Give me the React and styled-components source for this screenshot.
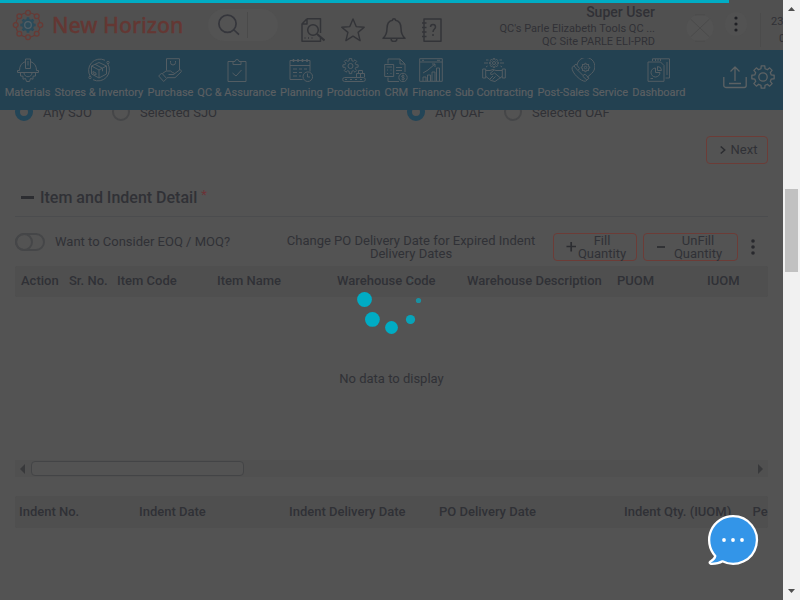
import React from "react";
import styled, { createGlobalStyle } from "styled-components";

const GlobalStyle = createGlobalStyle`
  * { box-sizing: border-box; }
  body { margin: 0; overflow: hidden; background: #535353; font-family: Roboto, "Liberation Sans", sans-serif; }
`;

const ink = "#303136";
const line = "#4b4c4e";

const Screen = styled.div`
  position: relative;
  display: grid;
  grid-template-columns: 783px 17px;
  width: 800px;
  height: 600px;
  overflow: hidden;
  color: ${ink};
`;
const Page = styled.div`
  display: flex;
  flex-direction: column;
  min-width: 0;
  height: 600px;
  overflow: hidden;
  background: #535353;
`;
const Progress = styled.div`
  position: absolute;
  top: 0;
  left: 0;
  width: 729px;
  height: 3px;
  background: #00acc4;
`;

/* Header */
const Header = styled.header`
  display: flex;
  align-items: flex-start;
  flex: none;
  height: 50px;
  padding-left: 12px;
  background: #505050;
  overflow: hidden;
`;
const LogoMark = styled.svg`
  flex: none;
  width: 32px;
  height: 32px;
  margin-top: 9px;
`;
const Brand = styled.div`
  flex: none;
  width: 164px;
  padding: 8px 0 0 8px;
  font: 500 21.3px/33px "Noto Sans", sans-serif;
  -webkit-text-stroke: 0.3px #643733;
  color: #643733;
  white-space: nowrap;
`;
const SearchPill = styled.div`
  display: flex;
  flex: none;
  width: 70px;
  height: 32px;
  margin-top: 9px;
  border-radius: 16px;
  background: #535353;
`;
const SearchButton = styled.div`
  width: 40px;
  height: 26px;
  margin-top: 3px;
  padding: 2px 0 0 9px;
  border-right: 1px solid #4a4a4a;
`;
const HeaderIcons = styled.div`
  display: flex;
  flex: none;
  gap: 16.4px;
  margin: 18px 0 0 23px;
  svg { flex: none; }
`;
const UserBlock = styled.div`
  flex: 1;
  padding-top: 3px;
  text-align: right;
  white-space: nowrap;
`;
const UserName = styled.div`
  font-size: 14px;
  line-height: 18px;
  margin-bottom: 1px;
  font-weight: 500;
`;
const UserLine = styled.div`
  font-size: 11px;
  line-height: 13px;
`;
const Avatar = styled.div`
  flex: none;
  width: 28px;
  height: 28px;
  margin: 14px 0 0 31px;
`;
const MoreCircle = styled.div`
  display: flex;
  flex: none;
  align-items: center;
  justify-content: center;
  width: 22px;
  height: 24px;
  margin: 12px 0 0 11px;
  border-radius: 12px;
  background: #525252;
`;
const Clock = styled.div`
  flex: none;
  width: 23px;
  margin: 13px 0 0 13px;
  padding-left: 10px;
  border-left: 1px solid #4b4b4b;
  font-size: 11px;
  line-height: 17px;
  white-space: nowrap;
`;
const ClockLine = styled.div`
  padding-left: ${(p) => (p.$second ? 8 : 0)}px;
`;

/* Module bar */
const ModuleBar = styled.nav`
  display: flex;
  flex: none;
  height: 60px;
  padding: 8px 0 0 5px;
  background: #234151;
  color: #5b5f62;
`;
const Module = styled.div`
  display: flex;
  flex-direction: column;
  flex: none;
  align-items: center;
  width: ${(p) => p.$w}px;
  margin-right: 4.3px;
  font-size: 11px;
  line-height: 14px;
  font-weight: 400;
  -webkit-text-stroke: 0.2px #5b5f62;
  white-space: nowrap;
  svg { flex: none; margin-bottom: 4px; color: #535d63; }
`;
const BarTools = styled.div`
  display: flex;
  gap: 4px;
  margin: 7px 0 0 auto;
  padding-right: 8px;
  color: #5d6264;
`;

/* Form content */
const Content = styled.main`
  flex: 1;
  min-height: 0;
  padding: 0 15px;
  overflow: hidden;
  font-size: 13px;
`;
const RadioRow = styled.div`
  display: flex;
  height: 20px;
  margin-top: -8px;
`;
const RadioOption = styled.div`
  display: flex;
  align-items: center;
  gap: 10px;
  width: ${(p) => p.$w}px;
  line-height: 20px;
  span + span { margin-top: 2px; }
`;
const RadioDot = styled.span`
  width: 18px;
  height: 18px;
  border-radius: 50%;
  border: ${(p) => (p.$on ? "5px solid #234557" : "2px solid #454648")};
`;
const NextRow = styled.div`
  display: flex;
  justify-content: flex-end;
  margin-top: 14px;
`;
const OutlineButton = styled.div`
  display: flex;
  flex: none;
  align-items: center;
  justify-content: center;
  gap: ${(p) => p.$gap}px;
  width: ${(p) => p.$w}px;
  height: 28px;
  padding: 0 0 ${(p) => p.$lift || 0}px ${(p) => p.$pad || 0}px;
  border: 1px solid #6c3c37;
  border-radius: 4px;
  line-height: 13px;
  text-align: center;
`;
const UnfillButton = styled(OutlineButton)`
  margin-left: 6px;
  padding-right: 2px;
`;
const SectionTitle = styled.div`
  display: flex;
  align-items: center;
  height: 40px;
  margin-top: 13px;
  padding: 2px 0 0 6px;
  border-bottom: 1px solid ${line};
  font-size: 16px;
  font-weight: 500;
`;
const Dash = styled.span`
  width: 13px;
  height: 3px;
  margin: 0 6px 0 0;
  background: #2c2d31;
`;
const Required = styled.span`
  margin: -7px 0 0 4px;
  font-size: 13px;
  font-weight: 400;
  color: #6d3236;
`;
const Actions = styled.div`
  display: flex;
  align-items: center;
  height: 28px;
  margin-top: 16px;
`;
const Toggle = styled.div`
  flex: none;
  width: 30px;
  height: 18px;
  margin-top: -10px;
  border: 2px solid #454648;
  border-radius: 9px;
`;
const ToggleKnob = styled.div`
  width: 18px;
  height: 18px;
  margin: -2px 0 0 -2px;
  border: 2px solid #454648;
  border-radius: 50%;
`;
const ToggleLabel = styled.div`
  width: 226px;
  margin: -11px 0 0 10px;
`;
const ChangeDate = styled.div`
  width: 260px;
  margin-right: 12px;
  line-height: 13px;
  text-align: center;
`;
const RowMenu = styled.div`
  margin-left: 12px;
  height: 18px;
`;
const HeadRow = styled.div`
  display: flex;
  align-items: center;
  height: ${(p) => p.$h}px;
  margin-top: ${(p) => p.$mt}px;
  padding: 0 0 2px ${(p) => p.$pl}px;
  background: #4f4f4f;
  border-radius: 2px;
  overflow: hidden;
  font-weight: 500;
  white-space: nowrap;
`;
const HeadCell = styled.div`
  flex: none;
  width: ${(p) => p.$w}px;
`;
const Empty = styled.div`
  display: flex;
  align-items: center;
  justify-content: center;
  height: 163px;
`;
const HScroll = styled.div`
  display: flex;
  align-items: center;
  height: 17px;
  padding: 0 5px;
  background: #505050;
`;
const HThumb = styled.div`
  width: 213px;
  height: 15px;
  margin: 0 auto 0 6px;
  border: 1px solid #434446;
  border-radius: 4px;
  background: #535353;
`;

/* Window scroll bar */
const VScroll = styled.div`
  display: flex;
  flex-direction: column;
  align-items: center;
  height: 600px;
  padding: 7px 0;
  background: #f1f1f1;
  svg { flex: none; }
`;
const VThumb = styled.div`
  width: 13px;
  height: 83px;
  margin: 178px 0 auto;
  background: #c1c1c1;
`;

/* Floating layers */
const Spinner = styled.svg`
  position: absolute;
  left: 350px;
  top: 270px;
`;
const Chat = styled.svg`
  position: absolute;
  left: 705px;
  top: 512px;
`;

const Icon = ({ children, size = 24, stroke = "currentColor", sw = 1, box = 24 }) => (
  <svg width={size} height={size} viewBox={`0 0 ${box} ${box}`} fill="none" stroke={stroke} strokeWidth={sw} strokeLinejoin="round">
    {children}
  </svg>
);

const gearPath = (cx, cy, R, r, n = 8) => {
  const pts = [];
  for (let i = 0; i < n; i++) {
    [[-0.31, r], [-0.2, R], [0.2, R], [0.31, r]].forEach(([o, rad]) => {
      const a = ((i + o) * 2 * Math.PI) / n - Math.PI / 2;
      pts.push(`${(cx + rad * Math.cos(a)).toFixed(2)} ${(cy + rad * Math.sin(a)).toFixed(2)}`);
    });
  }
  return `M${pts.join("L")}Z`;
};

const modules = [
  ["Materials", 45.2, <>
    <path d="M3.500 12.500c0-4.500 2-7.500 5.500-8.700M15 3.800c3.500 1.200 5.500 4.200 5.500 8.700M1.500 14.500h21v-2h-2M1.500 14.500v-2h2M9.500 10.500V1h5v9.500zM12 3v4.500" />
    <path d="M4.500 14.500v3.500l2.500.2v3l2.500-.7 1 3h3l1-3 2.500.7v-3l2.500-.2v-3.500M8 15c.5 5 7.500 5 8 0" />
  </>],
  ["Stores & Inventory", 88.9, <>
    <path d="M3.400 18.500A11.300 11.300 0 0 1 18 2.300M20.600 5.500A11.300 11.300 0 0 1 6 21.700" />
    <path d="M12 4.500l7.500 3.500v8L12 20l-7.500-4V8zM4.500 8l7.500 4 7.500-4M12 12v8M8 6.300l7.500 4v3M6 13.500l3 1.500v2l-3-1.500z" />
    <circle cx="21" cy="4.500" r="1.200" /><circle cx="3" cy="19.500" r="1.200" />
  </>],
  ["Purchase", 45.5, <>
    <path d="M8.500 12.500V.7h13V12M12.500 3v1.500a2.500 2.500 0 0 0 5 0V3" />
    <path d="M.7 18l3-3 5 5.500-3 3zM4.500 15.500l3.500-2.500h4.500l2 1.500c2 0 2.500 2 .5 2h-4.500M15.500 16.500l6-4.500c1.500-.5 2.500 1 1.500 2L17 19.700H9" />
  </>],
  ["QC & Assurance", 78.5, <>
    <path d="M8 3.500H3v20h18v-20h-5M8 6.500h8v-3h-2a2 2 0 0 0-4 0H8zM7.500 15l3.500 3 5.500-6" />
  </>],
  ["Planning", 42.3, <>
    <path d="M13.500 21.500H1v-19h20V13.500M1 7.500h20" /><path d="M4.500 1v3M9 1v3M13.500 1v3M18 1v3" strokeWidth="1.600" /><path d="M4 11h4M10 11h3M15 11h3M4 14.500h4M10 14.500h3M4 18h4M10 18h2" />
    <circle cx="18.800" cy="18.700" r="4.800" /><path d="M18.500 15.500v3.500h2.500" />
  </>],
  ["Production", 53.4, <>
    <path d={gearPath(8.500, 8, 7.700, 5.500)} /><circle cx="8.500" cy="8" r="2.500" />
    <rect x=".7" y="19.500" width="22.600" height="4" rx="2" /><path d="M3 21.500h2M8 21.500h2M13 21.500h2M18 21.500h2M14.500 19v-3.500h8V19M18.500 15.500V19M16.500 15.500v-3h4v3" />
  </>],
  ["CRM", 23.4, <>
    <path d="M4 5.500V1h12l5 5v8M16 1v5h5M4 19.500v4h11M.7 6.500h9v12h-9zM2.500 9h5.500M3 12h1M6.500 12h1M3 15.500h1M6.500 15.500h1M12 9.500h6M12 12.500h6M12 15.500h3" />
    <circle cx="19" cy="19.500" r="4.200" /><path d="M20.500 18c-1-1-3-.5-3 .5s3 .7 3 2-2 1.500-3 .5M19 16.500v6" />
  </>],
  ["Finance", 38.5, <>
    <path d="M.7.7h22.600v22.600H.7zM.7 4h22.600M3 2.300h2M18 2.300h3M4 23v-4h3v4M8.500 23v-6h3v6M13 23v-9h3v9M17.500 23V10h3v13M4 15l5-3 7-6M13 6h3v3" />
  </>],
  ["Sub Contracting", 78.1, <>
    <path d={gearPath(12, 5, 4.600, 3.300)} /><circle cx="12" cy="5" r="1.500" />
    <path d="M6 5H2M6.500 2H4M18 5h4M17.500 2H20M5.500 8L4 9M18.500 8l1.500 1M.7 11h3v9h-3zM20.300 11h3v9h-3zM4 12.500h4l3-1 3 1h6M12 12l-4 3.500c1 1.500 3 1 4.500-.5l6 5M4 18.500l5 4 4 1 7-5M11 18l-3 3M13.500 18.500l-3 3" />
  </>],
  ["Post-Sales Service", 90.6, <>
    <path d="M6 7A9 9 0 1 1 20.500 15.500L16 19.500" /><path d={gearPath(14.500, 9.500, 4.300, 3)} /><circle cx="14.500" cy="9.500" r="1.200" />
    <path d="M1 9.500L5 6l3.500 4.500L7 12.500l5 5 2-1.300 4 4-3.500 3C10.500 24 .5 15 1 9.500zM3 8l3.800 4.500M11.500 18l4.300 4" />
  </>],
  ["Dashboard", 53, <>
    <path d="M5.500 3V.8H22.500V20h-4M1 4h12.500l3.500 3.500V23.300H1zM8.500 1v2M11 1v2M13.500 1v2M20 4v13" />
    <path d="M8.500 10a4.500 4.500 0 1 0 4.500 4.500H8.500zM10.500 8.500v4h4a4 4 0 0 0-4-4zM3.500 20.500H6" />
  </>],
];

const cols1 = [["Action", 48], ["Sr. No.", 48], ["Item Code", 100], ["Item Name", 120], ["Warehouse Code", 130], ["Warehouse Description", 150], ["PUOM", 90], ["IUOM", 60]];
const cols2 = [["Indent No.", 120], ["Indent Date", 150], ["Indent Delivery Date", 150], ["PO Delivery Date", 185], ["Indent Qty. (IUOM)", 128.5], ["Pe", 16]];

const VDots = ({ color, r = 1.8 }) => (
  <svg width="6" height="18" viewBox="0 0 6 18" fill={color}>
    <circle cx="3" cy="3" r={r} /><circle cx="3" cy="9" r={r} /><circle cx="3" cy="15" r={r} />
  </svg>
);

function TopHeader() {
  return (
    <Header>
      <LogoMark viewBox="0 0 32 32" fill="none">
        <circle cx="16" cy="16" r="12.200" stroke="#643a35" strokeWidth="1.100" />
        {Array.from({ length: 8 }, (_, i) => {
          const a = (i * Math.PI) / 4;
          return <circle key={i} cx={16 + 12.300 * Math.cos(a)} cy={16 + 12.300 * Math.sin(a)} r="2.400" fill="#505050" stroke="#683a35" strokeWidth="1.300" />;
        })}
        <path d={gearPath(16, 16, 7.800, 6)} fill="#2b4b5a" />
        <circle cx="16" cy="16" r="3.300" stroke="#525f66" strokeWidth="1.300" />
      </LogoMark>
      <Brand>New Horizon</Brand>
      <SearchPill>
        <SearchButton>
          <Icon stroke="#35363c" sw={1.700}><circle cx="10.500" cy="9.800" r="8.600" /><path d="M17 16l5 4.700" /></Icon>
        </SearchButton>
      </SearchPill>
      <HeaderIcons>
        <Icon stroke="#333438" sw={1.500}>
          <path d="M6 .8h13.500V15M6 .8L1 6v17.200h18.500V20M6 .8V6H1" /><circle cx="12" cy="12" r="5.300" /><path d="M16 16l7.500 6.500" strokeWidth="2" /><path d="M3.500 20h1M7 20h1M10.500 20h1" />
        </Icon>
        <Icon stroke="#333438" sw={1.400}><path d="M12 1l3.200 7.600 8 .6-6.100 5.200 2 8.200L12 18.200l-7.100 4.400 2-8.200L.8 9.200l8-.6z" /></Icon>
        <Icon stroke="#333438" sw={1.500}>
          <path d="M10.500 2.300a1.500 1.500 0 0 1 3 0c4.500 1 5.500 4 5.500 8 0 5 1 7.500 4 10H1c3-2.500 4-5 4-10 0-4 1-7 5.500-8zM9 20.500a3 3 0 0 0 6 0" />
        </Icon>
        <Icon stroke="#333438" sw={1.500}>
          <path d="M2 1h17v22.200H2zM0 5h4.500M0 9.500h4.500M0 14h4.500M0 18.500h4.500M8.500 9c0-3.500 5-3.500 5 0 0 2-2.500 2-2.500 5M11 16v2" />
        </Icon>
      </HeaderIcons>
      <UserBlock>
        <UserName>Super User</UserName>
        <UserLine>QC's Parle Elizabeth Tools QC ...</UserLine>
        <UserLine>QC Site PARLE ELI-PRD</UserLine>
      </UserBlock>
      <Avatar>
        <Icon size={28} box={28} stroke="#4a4a4a">
          <circle cx="14" cy="14" r="13.500" fill="#535353" stroke="none" /><path d="M4.500 5l19 18M23.500 5l-19 18M9 .8h10M9 27.200h10" />
        </Icon>
      </Avatar>
      <MoreCircle><VDots color="#202125" r={1.600} /></MoreCircle>
      <Clock><ClockLine>23</ClockLine><ClockLine $second>0</ClockLine></Clock>
    </Header>
  );
}

export default function App() {
  return (
    <Screen>
      <GlobalStyle />
      <Page>
        <TopHeader />
        <ModuleBar>
          {modules.map(([name, w, art]) => (
            <Module key={name} $w={w}>
              <Icon>{art}</Icon>
              {name}
            </Module>
          ))}
          <BarTools>
            <Icon sw={1.300}><path d="M.8 12v8.500a2 2 0 0 0 2 2h18.400a2 2 0 0 0 2-2V12M6 18.500h12M12 16V2M7.500 6.500L12 2l4.500 4.500" /></Icon>
            <Icon sw={1.300}><path d={gearPath(12, 12, 11.300, 8.500)} /><circle cx="12" cy="12" r="4.200" /></Icon>
          </BarTools>
        </ModuleBar>
        <Content>
          <RadioRow>
            <RadioOption $w={97}><RadioDot $on /><span>Any SJO</span></RadioOption>
            <RadioOption $w={295}><RadioDot /><span>Selected SJO</span></RadioOption>
            <RadioOption $w={97}><RadioDot $on /><span>Any OAF</span></RadioOption>
            <RadioOption $w={120}><RadioDot /><span>Selected OAF</span></RadioOption>
          </RadioRow>
          <NextRow>
            <OutlineButton $w={62} $gap={5} $pad={3} $lift={1}>
              <svg width="6" height="8" viewBox="0 0 6 8" fill="none" stroke="#2c2d31" strokeWidth="1.500"><path d="M.7.5L4.700 4 .7 7.500" /></svg>
              Next
            </OutlineButton>
          </NextRow>
          <SectionTitle><Dash />Item and Indent Detail<Required>*</Required></SectionTitle>
          <Actions>
            <Toggle><ToggleKnob /></Toggle>
            <ToggleLabel>Want to Consider EOQ / MOQ?</ToggleLabel>
            <ChangeDate>Change PO Delivery Date for Expired Indent Delivery Dates</ChangeDate>
            <OutlineButton $w={84} $gap={2} $pad={2}>
              <svg width="10" height="10" viewBox="0 0 10 10" stroke="#2c2d31" strokeWidth="1.700"><path d="M.5 4.500H10M5.200 0v9.500" /></svg>
              <span>Fill<br />Quantity</span>
            </OutlineButton>
            <UnfillButton $w={95} $gap={8}>
              <svg width="9" height="3" viewBox="0 0 9 3" stroke="#2c2d31" strokeWidth="1.700"><path d="M0 1h8" /></svg>
              <span>UnFill<br />Quantity</span>
            </UnfillButton>
            <RowMenu><VDots color="#28292d" /></RowMenu>
          </Actions>
          <HeadRow $h={31} $mt={5} $pl={6}>
            {cols1.map(([t, w]) => <HeadCell key={t} $w={w}>{t}</HeadCell>)}
          </HeadRow>
          <Empty>No data to display</Empty>
          <HScroll>
            <svg width="5" height="10" viewBox="0 0 5 10" fill="#38393b"><path d="M5 0v10L0 5z" /></svg>
            <HThumb />
            <svg width="5" height="10" viewBox="0 0 5 10" fill="#38393b"><path d="M0 0v10l5-5z" /></svg>
          </HScroll>
          <HeadRow $h={32} $mt={19} $pl={4}>
            {cols2.map(([t, w]) => <HeadCell key={t} $w={w}>{t}</HeadCell>)}
          </HeadRow>
        </Content>
      </Page>
      <VScroll>
        <svg width="7" height="4" viewBox="0 0 7 4" fill="#505050"><path d="M0 4L3.500 0 7 4z" /></svg>
        <VThumb />
        <svg width="7" height="4" viewBox="0 0 7 4" fill="#505050"><path d="M0 0l3.500 4L7 0z" /></svg>
      </VScroll>
      <Progress />
      <Spinner width="80" height="70" fill="#00acc4">
        <circle cx="14.500" cy="29.500" r="7.400" /><circle cx="22.400" cy="49.400" r="7.400" /><circle cx="41.500" cy="57.500" r="6.400" />
        <circle cx="60.500" cy="49.500" r="4.600" opacity=".9" /><circle cx="68.500" cy="30.500" r="2.600" opacity=".7" /><circle cx="60.500" cy="10.500" r="1" opacity=".25" />
      </Spinner>
      <Chat width="56" height="56" viewBox="0 0 56 56">
        <path d="M28 4.200A23.800 23.800 0 1 1 17.500 49.300Q13 52 6 51.800Q3.500 51 5.500 49.500Q9.500 47.500 10.300 44A23.800 23.800 0 0 1 28 4.200Z" fill="#3395e8" stroke="#fff" strokeWidth="2.300" strokeLinejoin="round" />
        <circle cx="19" cy="28" r="1.900" fill="#fff" /><circle cx="28" cy="28" r="1.900" fill="#fff" /><circle cx="37" cy="28" r="1.900" fill="#fff" />
      </Chat>
    </Screen>
  );
}
